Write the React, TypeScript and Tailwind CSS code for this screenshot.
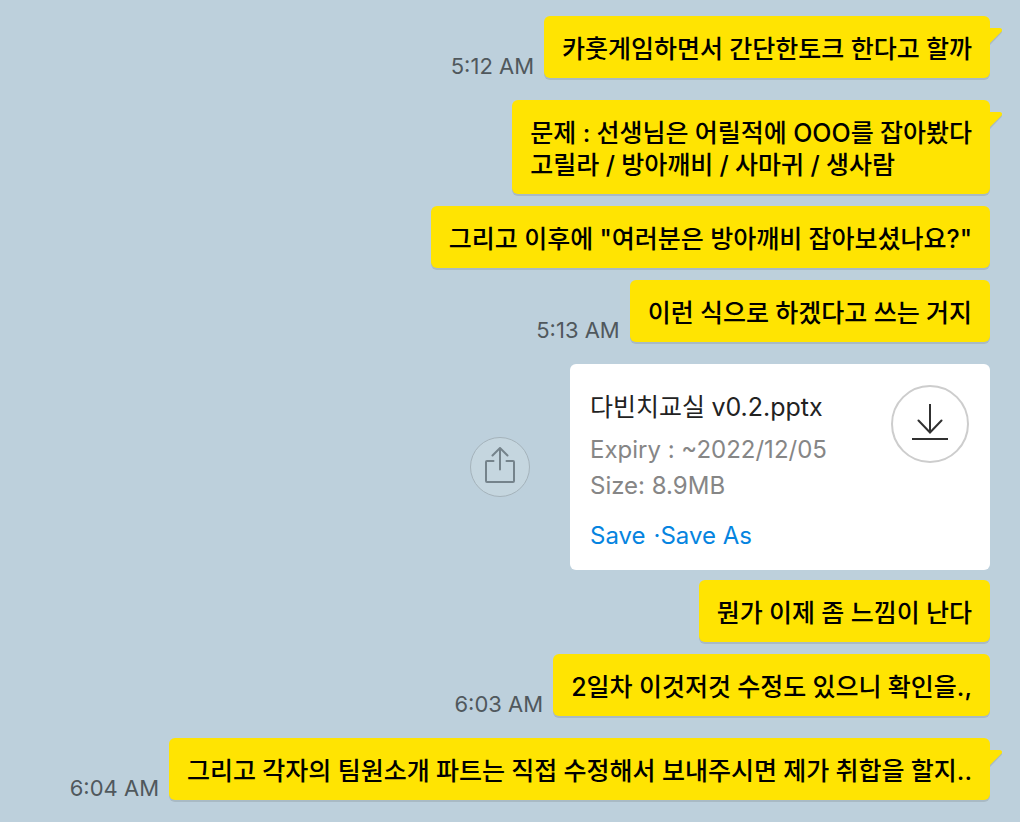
import { useId } from 'react';

interface Message {
  id: number;
  lines: string[];
  time?: string;
  tail?: boolean;
  gap: string;
}

const before: Message[] = [
  { id: 1, lines: ['카훗게임하면서 간단한토크 한다고 할까'], time: '5:12 AM', tail: true, gap: '' },
  { id: 2, lines: ['문제 : 선생님은 어릴적에 OOO를 잡아봤다', '고릴라 / 방아깨비 / 사마귀 / 생사람'], tail: true, gap: 'mt-[22px]' },
  { id: 3, lines: ['그리고 이후에 "여러분은 방아깨비 잡아보셨나요?"'], gap: 'mt-3' },
  { id: 4, lines: ['이런 식으로 하겠다고 쓰는 거지'], time: '5:13 AM', gap: 'mt-3' },
];

const after: Message[] = [
  { id: 5, lines: ['뭔가 이제 좀 느낌이 난다'], gap: 'mt-[10px]' },
  { id: 6, lines: ['2일차 이것저것 수정도 있으니 확인을.,'], time: '6:03 AM', gap: 'mt-3' },
  { id: 7, lines: ['그리고 각자의 팀원소개 파트는 직접 수정해서 보내주시면 제가 취합을 할지..'], time: '6:04 AM', tail: true, gap: 'mt-[22px]' },
];

// Latin runs use Inter, Hangul stays in the Korean font
function MixedText({ text }: { text: string }) {
  return (
    <>
      {text.split(/([\x21-\x7e]+)/).map((part, i) =>
        i % 2 ? <span key={i} className="font-[Inter,sans-serif] leading-none">{part}</span> : part
      )}
    </>
  );
}

function Tail() {
  return (
    <svg className="absolute left-full top-3 h-4 w-3 overflow-visible" viewBox="0 0 12 16" aria-hidden="true">
      <path d="M0 2H10.5Q13 3 11.5 5L0 17Z" fill="#a9bac4" />
      <path d="M-1 0H10Q13 .6 11.6 3.4L0 15H-1Z" fill="#ffe402" />
    </svg>
  );
}

function Bubble({ message }: { message: Message }) {
  return (
    <li className={`flex items-end justify-end gap-[10px] ${message.gap}`}>
      {message.time && (
        <time className="shrink-0 whitespace-nowrap font-[Inter,sans-serif] text-[22px] leading-6 text-[#50585d]">
          {message.time}
        </time>
      )}
      <div className="relative rounded-md bg-[#ffe402] px-[18px] pt-4 pb-[14px] text-[25px] leading-8 font-medium text-black shadow-[0_2px_0_#a9bac4]">
        {message.lines.map((line) => (
          <p key={line}><MixedText text={line} /></p>
        ))}
        {message.tail && <Tail />}
      </div>
    </li>
  );
}

function FileCard() {
  const titleId = useId();
  return (
    <li className="mt-[22px] flex items-center justify-end gap-10">
      <button type="button" aria-label="Share" className="flex size-[60px] items-center justify-center rounded-full border border-[#a5b3bb] bg-[#c5d6df] text-[#75838b]">
        <svg className="size-10" viewBox="0 0 40 40" fill="none" stroke="currentColor" strokeWidth="2">
          <path d="M13.500 14H7Q6 14 6 15V34Q6 35 7 35H33Q34 35 34 34V15Q34 14 33 14H26.500" strokeLinecap="round" />
          <path d="M20 22.500V1M12.500 8.500L20 1L27.500 8.500" strokeLinecap="round" strokeLinejoin="round" />
        </svg>
      </button>
      <article aria-labelledby={titleId} className="flex w-[420px] items-start justify-between rounded-md bg-white px-5 pt-5 pb-4">
        <div className="font-[Inter,sans-serif] text-[24px] leading-9 text-[#868686]">
          <h2 id={titleId} className="mt-1 mb-2 font-[Lato,'Noto_Sans_CJK_KR',sans-serif] text-[25px] leading-9 text-[#222]">
            <MixedText text="다빈치교실 v0.2.pptx" />
          </h2>
          <p>Expiry : ~2022/12/05</p>
          <p>Size: 8.9MB</p>
          <div className="mt-[14px] flex text-[#0584e0]">
            <button type="button">Save</button>
            <span className="ml-2">·</span>
            <button type="button">Save As</button>
          </div>
        </div>
        <button type="button" aria-label="Download" className="m-px flex size-[78px] shrink-0 items-center justify-center rounded-full border-2 border-[#cdcdcd] text-[#303030]">
          <svg className="size-10" viewBox="0 0 40 40" fill="none" stroke="currentColor" strokeWidth="2">
            <path d="M20 0V28M8.500 16.500L20 28.500L31.500 16.500" strokeLinecap="round" />
            <path d="M2 35H38" />
          </svg>
        </button>
      </article>
    </li>
  );
}

export default function App() {
  return (
    <main className="min-h-screen bg-[#bdd0dc] px-[30px] pt-4 pb-[22px] font-[Lato,'Noto_Sans_CJK_KR',sans-serif]" lang="ko">
      <ul>
        {before.map((m) => <Bubble key={m.id} message={m} />)}
        <FileCard />
        {after.map((m) => <Bubble key={m.id} message={m} />)}
      </ul>
    </main>
  );
}
